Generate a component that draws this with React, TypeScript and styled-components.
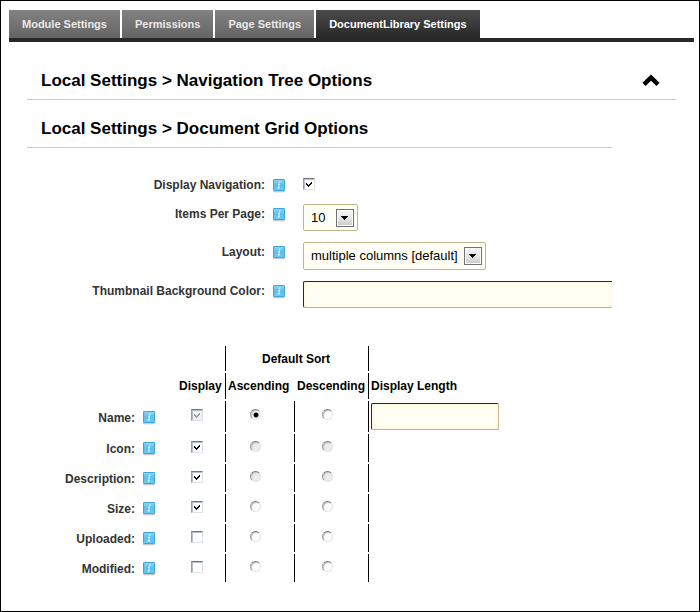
import React, { useState } from "react";
import styled, { createGlobalStyle, css } from "styled-components";

const GlobalStyle = createGlobalStyle`
  * { box-sizing: border-box; }
  body {
    margin: 0;
    background: #fff;
    font-family: "Liberation Sans", Arial, sans-serif;
    font-size: 12px;
    line-height: 16px;
    color: #333;
  }
`;

const Page = styled.main`
  min-height: 100vh;
  border: 1px solid #000;
  padding: 9px 5px 8px 8px;
`;

const TabBar = styled.nav`
  display: flex;
  gap: 2px;
  border-bottom: 4px solid #282828;
`;

const Tab = styled.button<{ $active: boolean }>`
  height: 28px;
  padding: 0 13px;
  border: 0;
  font: bold 11px/28px "Liberation Sans", Arial, sans-serif;
  white-space: nowrap;
  cursor: pointer;
  color: ${(p) => (p.$active ? "#fff" : "#e9e9e9")};
  background: ${(p) =>
    p.$active
      ? "linear-gradient(#4b4b4b, #282828)"
      : "linear-gradient(#828282, #646464)"};
`;

const Content = styled.div`
  padding: 20px 18px 0;
`;

const SectionHeader = styled.header<{ $inset?: boolean }>`
  display: flex;
  align-items: center;
  justify-content: space-between;
  height: 38px;
  margin-right: ${(p) => (p.$inset ? 64 : 0)}px;
  margin-bottom: 10px;
  padding: 0 16px 0 14px;
  border-bottom: 1px solid #ccc;
`;

const Heading = styled.h2`
  margin: 0;
  font-size: 17px;
  line-height: 20px;
  font-weight: bold;
  color: #000;
`;

const PlainButton = styled.button`
  display: block;
  padding: 0;
  border: 0;
  background: none;
  cursor: pointer;
  svg { display: block; }
`;

const Form = styled.div`
  display: grid;
  gap: 11px;
  margin: 27px 64px 0 0;
`;

const Field = styled.div`
  display: grid;
  grid-template-columns: 238px 12px minmax(0, 1fr);
  column-gap: 8px;
  align-items: start;
`;

const FieldLabel = styled.label`
  padding-top: 2px;
  text-align: right;
  font-weight: bold;
`;

const HelpSlot = styled.div`
  padding-top: 4px;
`;

const ControlSlot = styled.div<{ $top?: number }>`
  display: flex;
  padding: ${(p) => p.$top ?? 0}px 0 0 10px;
`;

const Stack = styled.span`
  display: inline-grid;
  vertical-align: top;
  align-items: center;
  > * { grid-area: 1 / 1; }
  > svg { justify-self: end; pointer-events: none; }
`;

const Select = styled.select<{ $tall?: boolean; $wide?: boolean }>`
  appearance: none;
  width: ${(p) => (p.$wide ? 183 : 55)}px;
  height: ${(p) => (p.$tall ? 28 : 27)}px;
  padding: 0 24px 0 7px;
  border: 1px solid #bbb68c;
  border-radius: 2px;
  background: #fffff5;
  color: #000;
  font: 13px/20px "Liberation Sans", Arial, sans-serif;
`;

const ArrowSvg = styled.svg`
  margin-right: 4px;
`;

const TextInput = styled.input<{ $open?: boolean }>`
  display: block;
  width: ${(p) => (p.$open ? "100%" : "128px")};
  height: 27px;
  padding: 0 6px;
  border: 1px solid #bbb68c;
  border-top-color: #2b2b26;
  border-left-color: #2b2b26;
  border-radius: 2px;
  background: #fffff5;
  box-shadow: inset 0 0 5px 1px #fff6d6;
  font: 13px/20px "Liberation Sans", Arial, sans-serif;
  ${(p) =>
    p.$open &&
    css`
      border-right: 0;
      border-radius: 2px 0 0 2px;
    `}
`;

const CheckInput = styled.input`
  appearance: none;
  width: 12px;
  height: 12px;
  margin: 0;
  border: 1px solid #e0e0e4;
  border-top-color: #777;
  border-left-color: #a29e9c;
  background: #fff;
  box-shadow: inset 1px 1px #b3bed0;
  &:disabled { background: #efefef; }
`;

const RadioInput = styled.input`
  display: block;
  appearance: none;
  width: 11px;
  height: 11px;
  margin: 0;
  border: 1px solid #e3e3e3;
  border-top-color: #777;
  border-left-color: #a5a09c;
  border-radius: 50%;
  background: #fff;
  box-shadow: inset 1px 1px #bcc5d2;
  &:disabled { background: #ececec; }
  &:checked {
    background: radial-gradient(circle at 5px 5px, #000 2px, #fff 3px);
  }
`;

const Grid = styled.table`
  margin-top: 36px;
  margin-left: 34px;
  border-spacing: 2px;
  border-collapse: separate;
  font-weight: bold;
`;

const HeadCell = styled.th<{ $line?: boolean; $center?: boolean }>`
  height: 25px;
  padding: 0 ${(p) => (p.$center ? 4 : 0)}px 0 0;
  text-align: ${(p) => (p.$center ? "center" : "left")};
  white-space: nowrap;
  color: #000;
  border-right: ${(p) => (p.$line ? "1px solid #000" : "0")};
`;

const ColumnHead = styled(HeadCell)`
  height: 26px;
`;

const RowHead = styled.th`
  padding: 2px 0 0;
  text-align: right;
`;

const RowLabel = styled.div`
  display: flex;
  align-items: center;
  justify-content: flex-end;
  gap: 8px;
  padding-right: 22px;
`;

const Cell = styled.td<{ $line?: boolean; $tall?: boolean }>`
  height: ${(p) => (p.$tall ? 31 : 28)}px;
  padding: 0;
  border-right: ${(p) => (p.$line ? "1px solid #000" : "0")};
`;

const Centered = styled.div<{ $radio?: boolean }>`
  display: flex;
  justify-content: center;
  padding: 0 ${(p) => (p.$radio ? 11 : 10)}px ${(p) => (p.$radio ? 4 : 3)}px 0;
`;

const Column = styled.col<{ $w: number }>`
  width: ${(p) => p.$w}px;
`;

function Help({ topic }: { topic: string }) {
  return (
    <PlainButton type="button" aria-label={`Help: ${topic}`}>
      <svg width="12" height="14" viewBox="0 0 12 14">
        <defs>
          <linearGradient id="help" x1="0" y1="0" x2="0" y2="1">
            <stop offset="0" stopColor="#8fd6f4" />
            <stop offset="0.5" stopColor="#5cbdeb" />
            <stop offset="1" stopColor="#66cdf8" />
          </linearGradient>
        </defs>
        <rect x="0" y="12" width="12" height="1" fill="#c9c9c9" />
        <rect x="1" y="13" width="10" height="1" fill="#eee" />
        <rect x="0.5" y="0.5" width="11" height="11" rx="0.5" fill="url(#help)" stroke="#3fa6dc" />
        <path d="M6.2 2.5h1.4l-.3 1.3H5.9zM5 4.8h2.1l-.9 3.7h.8l-.2.9H4.4l.2-.9h.6l.7-2.8H4.8z" fill="#e6f7ff" />
      </svg>
    </PlainButton>
  );
}

function Check(props: { label?: string; id?: string; initial: boolean; disabled?: boolean }) {
  const [on, setOn] = useState(props.initial);
  return (
    <Stack>
      <CheckInput
        type="checkbox"
        id={props.id}
        aria-label={props.label}
        checked={on}
        disabled={props.disabled}
        onChange={() => setOn(!on)}
      />
      {on && (
        <svg width="12" height="12" viewBox="0 0 12 12" shapeRendering="crispEdges">
          <path
            d="M3 5h1v1h1v1h1v-1h1v-1h1v-1h1v2h-1v1h-1v1h-1v1h-1v-1h-1v-1h-1z"
            fill={props.disabled ? "#9a9a9a" : "#000"}
          />
        </svg>
      )}
    </Stack>
  );
}

function DropDown(props: { id: string; options: string[]; tall?: boolean; wide?: boolean }) {
  return (
    <Stack>
      <Select id={props.id} $tall={props.tall} $wide={props.wide}>
        {props.options.map((o) => (
          <option key={o}>{o}</option>
        ))}
      </Select>
      <ArrowSvg width="18" height="18" viewBox="0 0 18 18">
        <defs>
          <linearGradient id="arrow" x1="0" y1="0" x2="0" y2="1">
            <stop offset="0" stopColor="#f4f4f4" />
            <stop offset="0.5" stopColor="#e6e6e6" />
            <stop offset="1" stopColor="#cdcdcd" />
          </linearGradient>
        </defs>
        <rect x="0.5" y="0.5" width="17" height="17" fill="#fff" stroke="#707070" />
        <rect x="2" y="2" width="14" height="14" fill="url(#arrow)" />
        <path d="M5 7h7v1h-1v1h-1v1h-1v1h-1v-1h-1v-1h-1v-1h-1z" fill="#000" shapeRendering="crispEdges" />
      </ArrowSvg>
    </Stack>
  );
}

const tabs = ["Module Settings", "Permissions", "Page Settings", "DocumentLibrary Settings"];

const rows = [
  { name: "Name", shown: true, locked: true, sortable: true },
  { name: "Icon", shown: true, locked: false, sortable: false },
  { name: "Description", shown: true, locked: false, sortable: false },
  { name: "Size", shown: true, locked: false, sortable: true },
  { name: "Uploaded", shown: false, locked: false, sortable: true },
  { name: "Modified", shown: false, locked: false, sortable: true },
];

export default function App() {
  const [active, setActive] = useState(3);
  const [sort, setSort] = useState("Name Ascending");
  return (
    <Page>
      <GlobalStyle />
      <TabBar>
        {tabs.map((t, i) => (
          <Tab key={t} type="button" $active={i === active} onClick={() => setActive(i)}>
            {t}
          </Tab>
        ))}
      </TabBar>
      <Content>
        <SectionHeader>
          <Heading>Local Settings &gt; Navigation Tree Options</Heading>
          <PlainButton type="button" aria-label="Collapse section">
            <svg width="18" height="13" viewBox="0 0 18 13">
              <path d="M2 10.4 9 3.6l7 6.8" fill="none" stroke="#000" strokeWidth="4.4" />
            </svg>
          </PlainButton>
        </SectionHeader>
        <SectionHeader $inset>
          <Heading>Local Settings &gt; Document Grid Options</Heading>
        </SectionHeader>
        <Form>
          <Field>
            <FieldLabel htmlFor="nav">Display Navigation:</FieldLabel>
            <HelpSlot><Help topic="Display Navigation" /></HelpSlot>
            <ControlSlot $top={3}><Check id="nav" initial /></ControlSlot>
          </Field>
          <Field>
            <FieldLabel htmlFor="items">Items Per Page:</FieldLabel>
            <HelpSlot><Help topic="Items Per Page" /></HelpSlot>
            <ControlSlot><DropDown id="items" options={["10", "20", "50"]} /></ControlSlot>
          </Field>
          <Field>
            <FieldLabel htmlFor="layout">Layout:</FieldLabel>
            <HelpSlot><Help topic="Layout" /></HelpSlot>
            <ControlSlot>
              <DropDown id="layout" tall wide options={["multiple columns [default]"]} />
            </ControlSlot>
          </Field>
          <Field>
            <FieldLabel htmlFor="thumb">Thumbnail Background Color:</FieldLabel>
            <HelpSlot><Help topic="Thumbnail Background Color" /></HelpSlot>
            <ControlSlot><TextInput id="thumb" type="text" $open /></ControlSlot>
          </Field>
        </Form>
        <Grid>
          <colgroup>
            <Column $w={114} />
            <Column $w={47} />
            <Column $w={67} />
            <Column $w={72} />
            <Column $w={130} />
          </colgroup>
          <thead>
            <tr>
              <HeadCell as="td" />
              <HeadCell as="td" $line />
              <HeadCell colSpan={2} $line $center scope="colgroup">Default Sort</HeadCell>
              <HeadCell as="td" />
            </tr>
            <tr>
              <ColumnHead as="td" />
              <ColumnHead $line scope="col">Display</ColumnHead>
              <ColumnHead scope="col">Ascending</ColumnHead>
              <ColumnHead $line scope="col">Descending</ColumnHead>
              <ColumnHead scope="col">Display Length</ColumnHead>
            </tr>
          </thead>
          <tbody>
            {rows.map((r, i) => (
              <tr key={r.name}>
                <RowHead scope="row">
                  <RowLabel>
                    {r.name}:
                    <Help topic={r.name} />
                  </RowLabel>
                </RowHead>
                <Cell $line $tall={i === 0}>
                  <Centered>
                    <Check label={`Display ${r.name}`} initial={r.shown} disabled={r.locked} />
                  </Centered>
                </Cell>
                {["Ascending", "Descending"].map((dir) => (
                  <Cell key={dir} $line>
                    <Centered $radio>
                      <RadioInput
                        type="radio"
                        name="sort"
                        aria-label={`Sort by ${r.name}, ${dir}`}
                        disabled={!r.sortable}
                        checked={sort === `${r.name} ${dir}`}
                        onChange={() => setSort(`${r.name} ${dir}`)}
                      />
                    </Centered>
                  </Cell>
                ))}
                <Cell>{i === 0 && <TextInput type="text" aria-label="Name display length" />}</Cell>
              </tr>
            ))}
          </tbody>
        </Grid>
      </Content>
    </Page>
  );
}
